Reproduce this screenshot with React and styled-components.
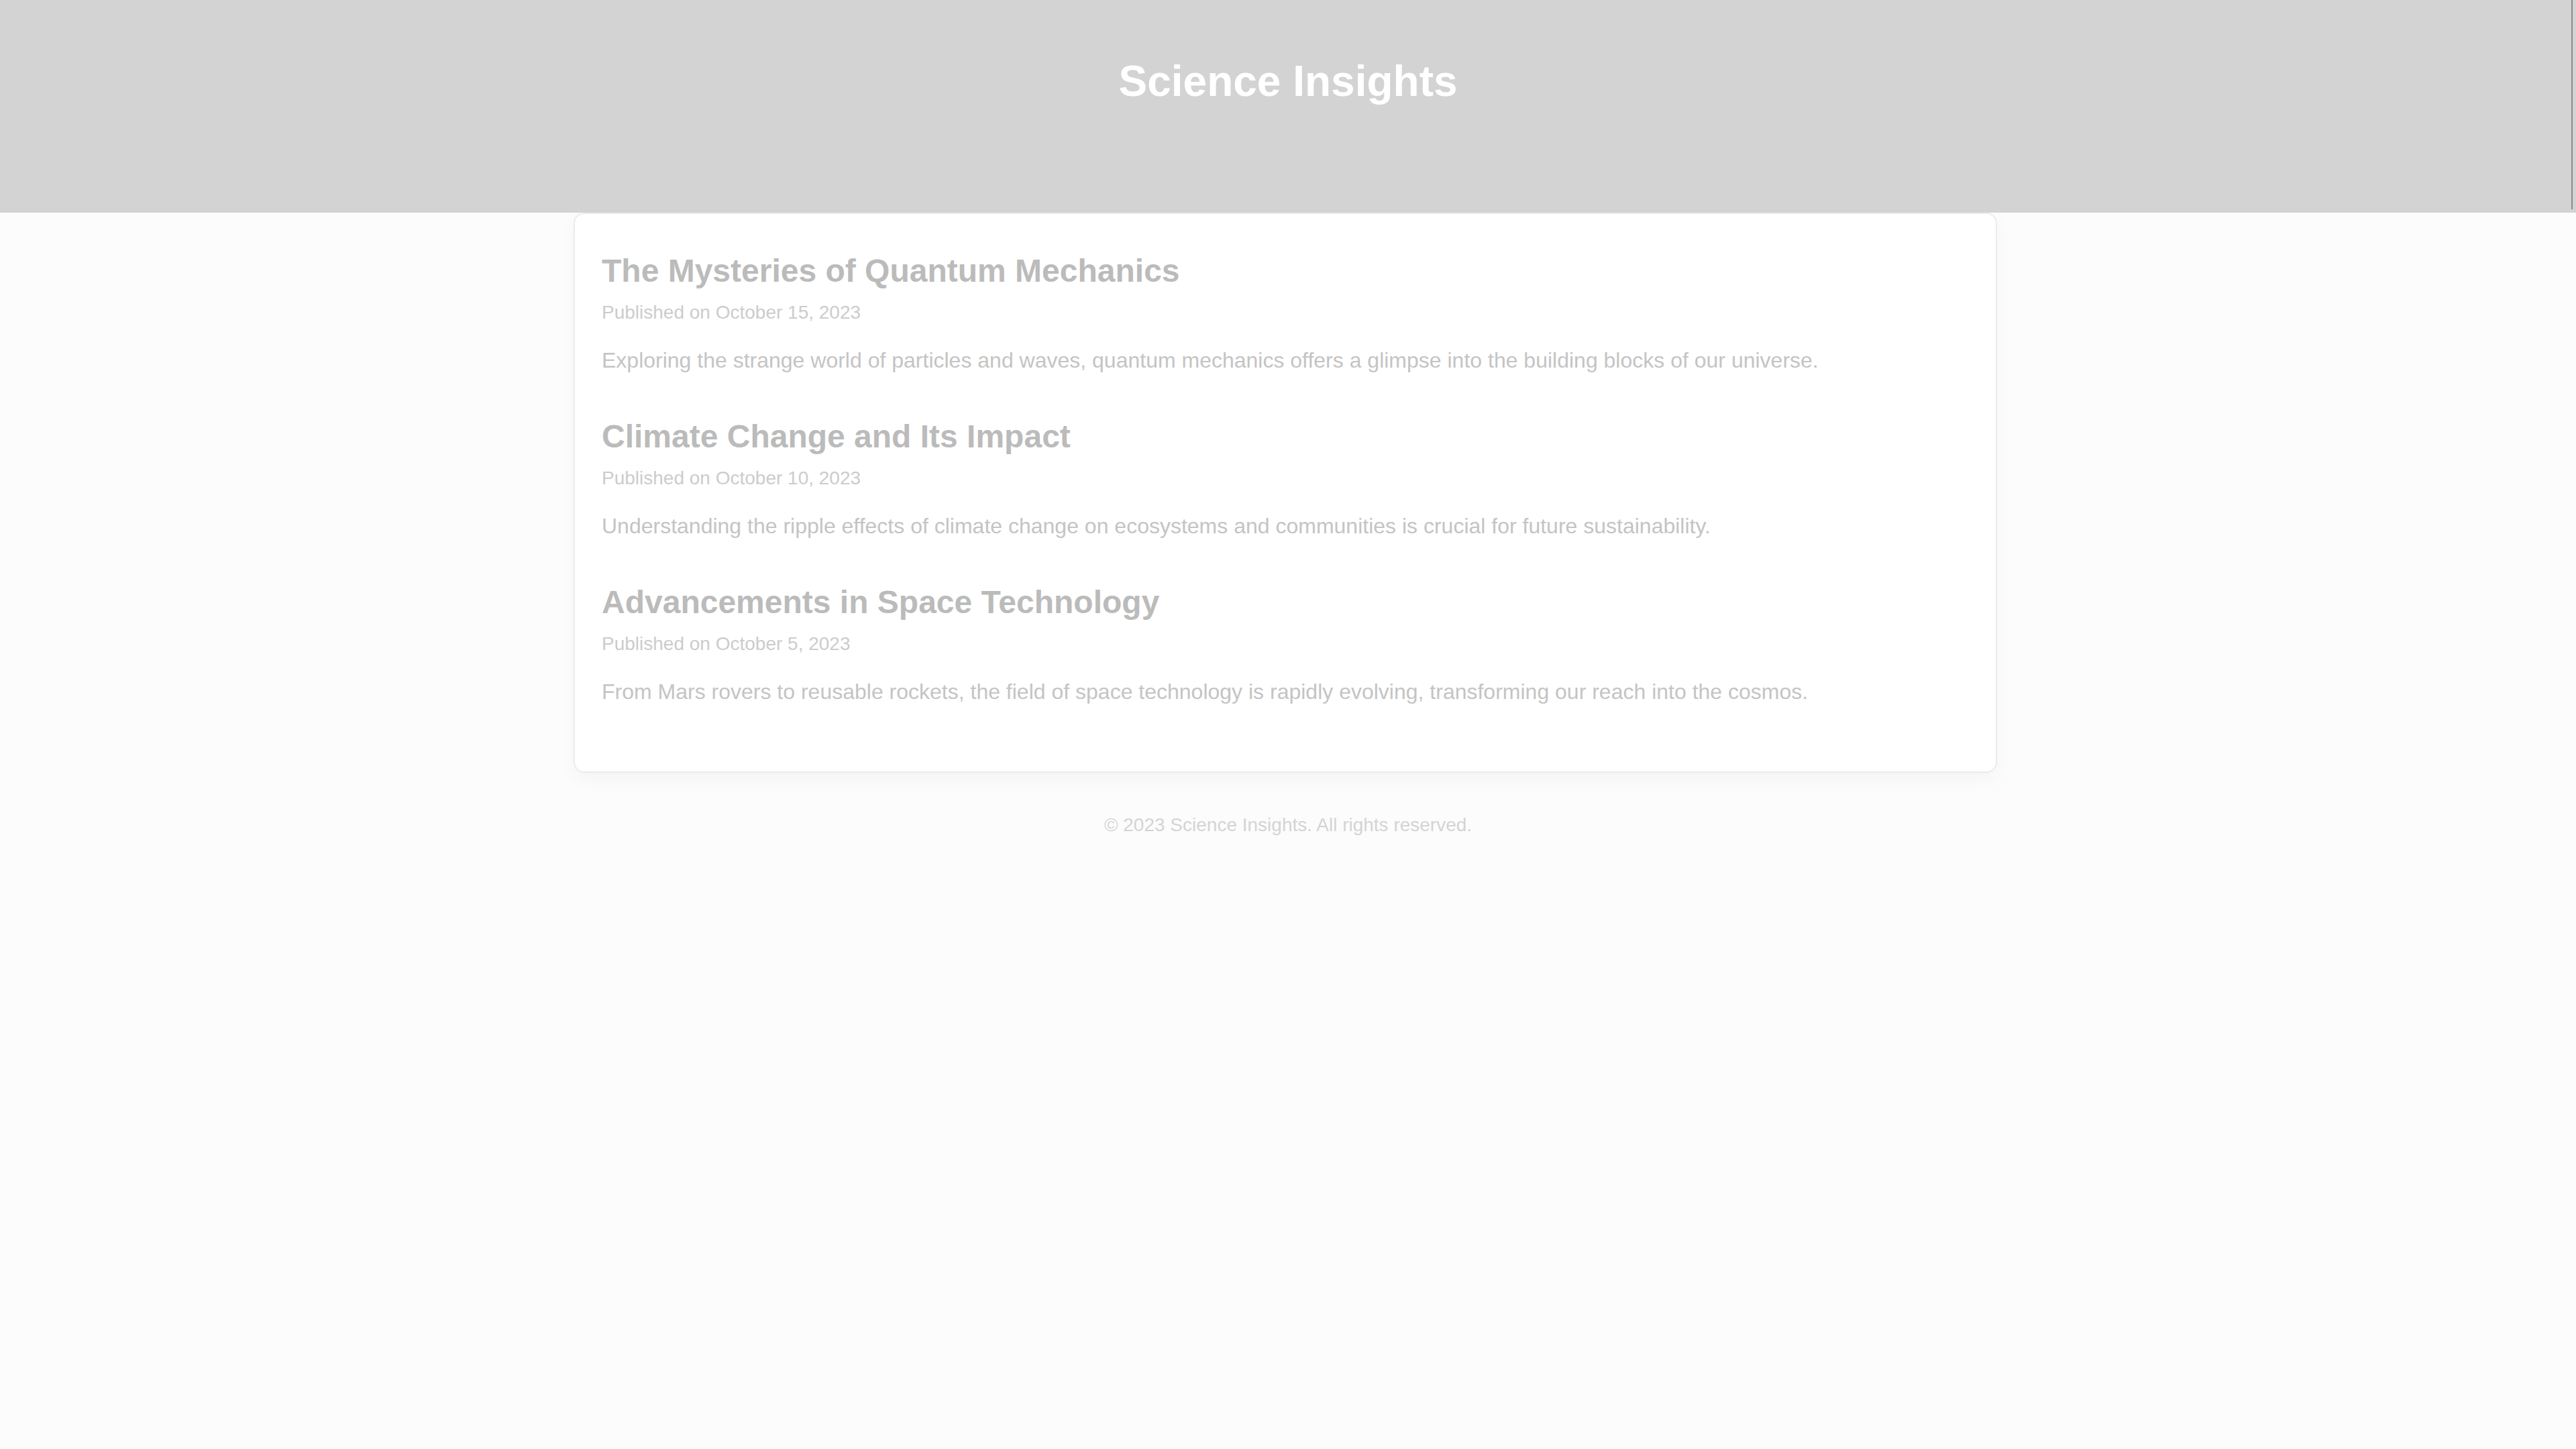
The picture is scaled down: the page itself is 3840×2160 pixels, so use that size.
import React from "react";
import styled, { createGlobalStyle } from "styled-components";

const Global = createGlobalStyle`
  html, body { margin: 0; padding: 0; }
  body {
    background: #fcfcfc;
    font-family: "Liberation Sans", Arial, sans-serif;
    min-height: 2160px;
  }
`;

const Header = styled.header`
  background: #d3d3d3;
  height: 317px;
  box-sizing: border-box;
  padding-top: 84px;
  text-align: center;
  position: relative;
  &::after {
    content: "";
    position: absolute;
    right: 5px;
    top: 0;
    bottom: 5px;
    width: 2px;
    background: #8a8a8a;
  }
`;

const SiteTitle = styled.h1`
  margin: 0;
  font-size: 64px;
  line-height: 74px;
  font-weight: 700;
  color: #ffffff;
`;

const Card = styled.main`
  box-sizing: border-box;
  width: 2122px;
  margin: 0 0 0 calc(50% - 1065px);
  background: #ffffff;
  border: 2px solid #ececec;
  border-radius: 16px;
  box-shadow: 0 10px 28px rgba(0, 0, 0, 0.035);
  padding: 57px 40px 95px;
  display: flex;
  flex-direction: column;
  gap: 62px;
`;

const Article = styled.article`
  display: flex;
  flex-direction: column;
`;

const ArticleTitle = styled.h2`
  margin: 0;
  font-size: 48px;
  line-height: 56px;
  font-weight: 700;
  color: #bbbbbb;
`;

const Meta = styled.div`
  margin-top: 18px;
  font-size: 28px;
  line-height: 32px;
  color: #cccccc;
`;

const Summary = styled.p`
  margin: 31px 0 0;
  font-size: 32px;
  line-height: 48px;
  color: #c4c4c4;
`;

const Footer = styled.footer`
  text-align: center;
  padding-top: 62px;
  font-size: 28px;
  line-height: 32px;
  color: #d4d4d4;
`;

const articles = [
  {
    title: "The Mysteries of Quantum Mechanics",
    date: "October 15, 2023",
    text: "Exploring the strange world of particles and waves, quantum mechanics offers a glimpse into the building blocks of our universe.",
  },
  {
    title: "Climate Change and Its Impact",
    date: "October 10, 2023",
    text: "Understanding the ripple effects of climate change on ecosystems and communities is crucial for future sustainability.",
  },
  {
    title: "Advancements in Space Technology",
    date: "October 5, 2023",
    text: "From Mars rovers to reusable rockets, the field of space technology is rapidly evolving, transforming our reach into the cosmos.",
  },
];

export default function App() {
  return (
    <>
      <Global />
      <Header>
        <SiteTitle>Science Insights</SiteTitle>
      </Header>
      <Card>
        {articles.map((a) => (
          <Article key={a.title}>
            <ArticleTitle>{a.title}</ArticleTitle>
            <Meta>Published on {a.date}</Meta>
            <Summary>{a.text}</Summary>
          </Article>
        ))}
      </Card>
      <Footer>© 2023 Science Insights. All rights reserved.</Footer>
    </>
  );
}
